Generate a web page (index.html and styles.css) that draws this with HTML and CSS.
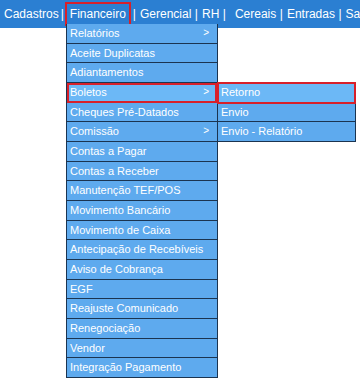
FILE: index.html
```html
<!DOCTYPE html>
<html>
<head>
<meta charset="utf-8">
<link rel="stylesheet" href="styles.css">
</head>
<body>
<div class="bar">
  <span class="top">Cadastros</span><span class="sep before-box">|</span><span class="top active">Financeiro</span><span class="sep after-box">|</span><span class="top">Gerencial</span><span class="sep">|</span><span class="top">RH</span><span class="sep wide">|</span><span class="top">Cereais</span><span class="sep">|</span><span class="top">Entradas</span><span class="sep">|</span><span class="top">Saídas</span>
</div>
<div class="menu">
  <div class="item">Relatórios<span class="arr">&gt;</span></div>
  <div class="item">Aceite Duplicatas</div>
  <div class="item">Adiantamentos</div>
  <div class="item hl">Boletos<span class="arr">&gt;</span>
    <div class="sub">
      <div class="item hl">Retorno</div>
      <div class="item">Envio</div>
      <div class="item">Envio - Relatório</div>
    </div>
  </div>
  <div class="item">Cheques Pré-Datados</div>
  <div class="item">Comissão<span class="arr">&gt;</span></div>
  <div class="item">Contas a Pagar</div>
  <div class="item">Contas a Receber</div>
  <div class="item">Manutenção TEF/POS</div>
  <div class="item">Movimento Bancário</div>
  <div class="item">Movimento de Caixa</div>
  <div class="item">Antecipação de Recebíveis</div>
  <div class="item">Aviso de Cobrança</div>
  <div class="item">EGF</div>
  <div class="item">Reajuste Comunicado</div>
  <div class="item">Renegociação</div>
  <div class="item">Vendor</div>
  <div class="item">Integração Pagamento</div>
</div>
</body>
</html>
```
FILE: styles.css
```css
html, body {
  margin: 0;
  padding: 0;
  background: #ffffff;
  width: 360px;
  height: 382px;
  overflow: hidden;
  font-family: "Liberation Sans", Arial, sans-serif;
}
.bar {
  height: 28px;
  background: #2b7fd2;
  color: #ffffff;
  font-size: 12px;
  display: flex;
  align-items: center;
  white-space: nowrap;
  padding-left: 4px;
  overflow: hidden;
}
.top {
  flex: none;
}
.top.active {
  border: 2px solid #d8202a;
  padding: 3px 3px 3px 3px;
}
.sep {
  flex: none;
  margin: 0 4px 0 3.5px;
}
.sep.before-box {
  margin-left: 2px;
  margin-right: 1px;
}
.sep.after-box {
  margin-left: 2px;
}
.sep.wide {
  margin-right: 9px;
}
.menu {
  position: absolute;
  left: 66px;
  top: 24px;
  width: 152px;
  border-left: 1px solid #1b3450;
  border-right: 1px solid #1b3450;
  box-sizing: border-box;
}
.item {
  position: relative;
  box-sizing: border-box;
  height: 19.67px;
  background: #5eaaee;
  color: #ffffff;
  font-size: 11px;
  line-height: 18px;
  padding-left: 3px;
  border-bottom: 1px solid #1b3450;
  white-space: nowrap;
}
.item.hl {
  background: #6cb8f6;
  outline: 2px solid #d8202a;
  outline-offset: -2px;
  z-index: 1;
}
.arr {
  position: absolute;
  right: 8px;
  top: 0;
  font-size: 10px;
}
.sub {
  position: absolute;
  left: 150px;
  top: 0;
  width: 139px;
  border-left: 1px solid #1b3450;
  border-right: 1px solid #1b3450;
  box-sizing: border-box;
}
.sub .item.hl {
  outline-offset: -1px;
}
```
